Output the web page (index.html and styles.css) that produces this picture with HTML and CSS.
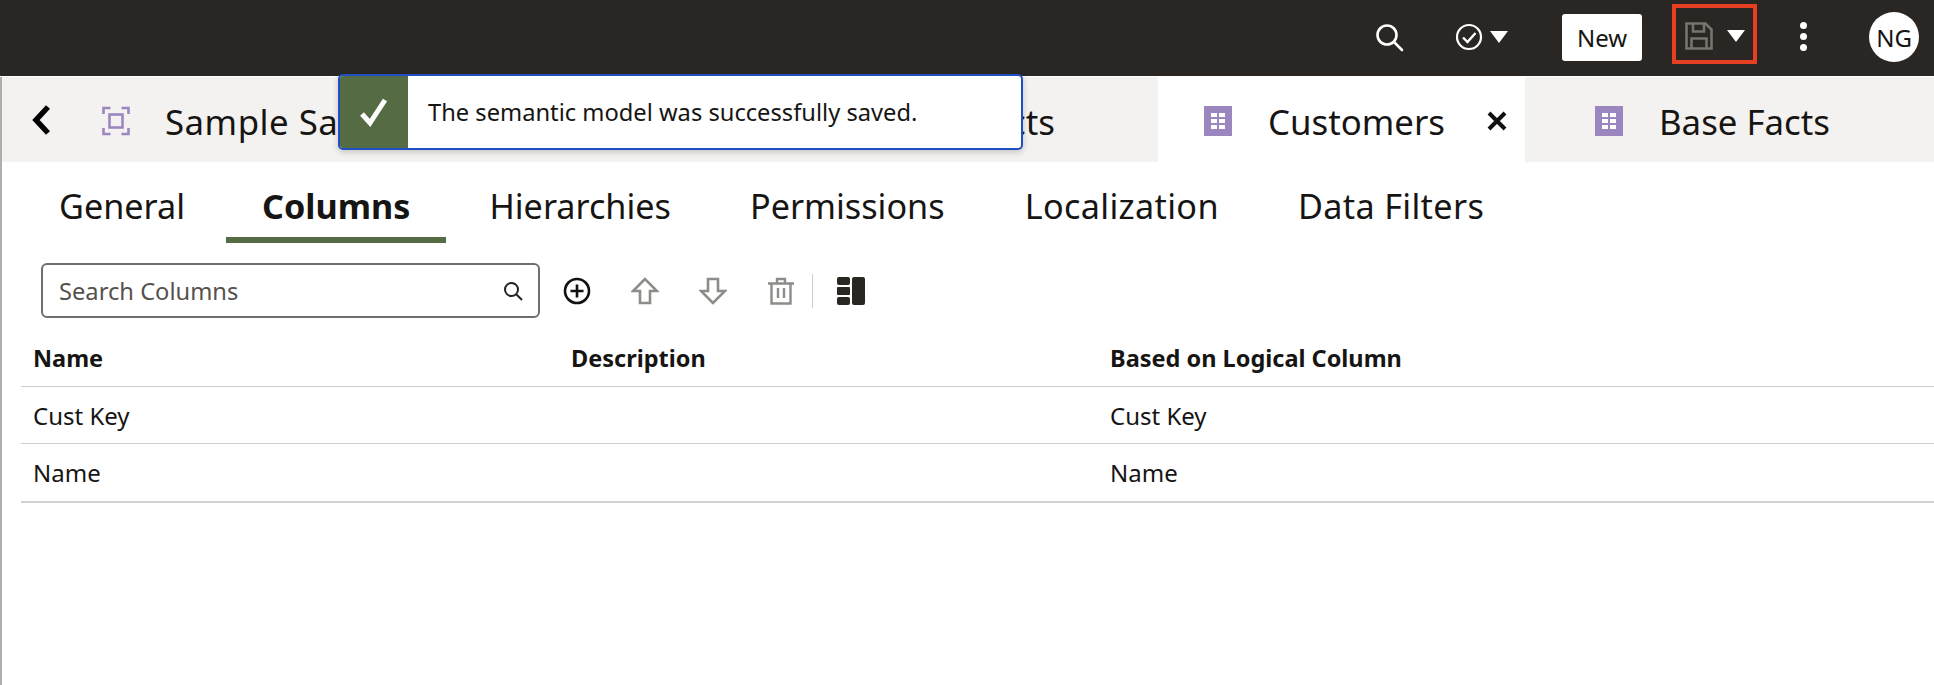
FILE: index.html
```html
<!DOCTYPE html>
<html lang="en">
<head>
  <meta charset="UTF-8" />
  <title>Semantic Model</title>
  <link rel="stylesheet" href="styles.css">
</head>
<body>

  <!-- Top bar -->
  <header class="topbar">
    <svg class="ic-search" width="30" height="30" viewBox="0 0 30 30" fill="none" stroke="#fff" stroke-width="2.600"><circle cx="13" cy="13" r="9.500"/><path d="M20 20l8 8" stroke-linecap="round"/></svg>
    <div class="check-menu">
      <svg width="28" height="28" viewBox="0 0 28 28" fill="none" stroke="#fff" stroke-width="2.200"><circle cx="14" cy="14" r="12"/><path d="M8 14.500l4.500 4.500 8-9" stroke-width="2.400"/></svg>
      <span class="caret"></span>
    </div>
    <button class="new-btn">New</button>
    <div class="save-menu">
      <svg width="28" height="28" viewBox="0 0 28 28" fill="none" stroke="#77746f" stroke-width="2.600"><path d="M1.500 1.500h19l6 6v19h-25z"/><path d="M8 1.500v8h11v-8M6.500 26.500v-10h15v10"/></svg>
      <span class="caret"></span>
    </div>
    <div class="dots"><i></i><i></i><i></i></div>
    <div class="avatar">NG</div>
  </header>

  <!-- Tabs -->
  <nav class="tabbar">
    <svg class="back" width="20" height="32" viewBox="0 0 20 32" fill="none" stroke="#000" stroke-width="5.500"><path d="M17 3L5 16l12 13"/></svg>
    <div class="tab tab-model">
      <svg width="28" height="30" viewBox="0 0 28 30" fill="none" stroke="#9c86c0" stroke-width="2.600"><path d="M1.500 8V2h7M19.500 2h7v6M26.500 22v6h-7M8.500 28h-7v-6"/><rect x="7.500" y="8.500" width="13" height="13"/></svg>
      <span>Sample Sales</span>
    </div>
    <div class="tab tab-mid"><span>Products</span></div>
    <div class="tab tab-active">
      <svg class="grid-ic" width="28" height="30" viewBox="0 0 28 30"><use href="#grid"/></svg>
      <span>Customers</span>
      <svg class="close" width="20" height="20" viewBox="0 0 20 20" stroke="#111" stroke-width="4"><path d="M2 2l16 16M18 2L2 18"/></svg>
    </div>
    <div class="tab tab-base">
      <svg class="grid-ic" width="28" height="30" viewBox="0 0 28 30"><use href="#grid"/></svg>
      <span>Base Facts</span>
    </div>
  </nav>

  <!-- Success message -->
  <div class="toast">
    <div class="toast-ok">
      <svg width="34" height="34" viewBox="0 0 34 34" fill="none" stroke="#fff" stroke-width="5"><path d="M5 19l8 9L28 5"/></svg>
    </div>
    <div class="toast-text">The semantic model was successfully saved.</div>
  </div>

  <main class="content">
    <div class="subtabs">
      <a class="st-general">General</a>
      <a class="selected">Columns</a>
      <a>Hierarchies</a>
      <a class="st-perm">Permissions</a>
      <a class="st-wide">Localization</a>
      <a class="st-wide">Data Filters</a>
    </div>

    <div class="toolbar">
      <div class="search">
        <span>Search Columns</span>
        <svg width="20" height="20" viewBox="0 0 20 20" fill="none" stroke="#222" stroke-width="2"><circle cx="8.500" cy="8.500" r="6.500"/><path d="M13 13l6 6"/></svg>
      </div>
      <div class="tools">
        <svg width="28" height="28" viewBox="0 0 28 28" fill="none" stroke="#111" stroke-width="2.600"><circle cx="14" cy="14" r="12"/><path d="M14 7.500v13M7.500 14h13"/></svg>
        <svg width="28" height="28" viewBox="0 0 28 28" fill="none" stroke="#8e8c88" stroke-width="2.600"><path d="M14 2L2 14h7v12h10V14h7z"/></svg>
        <svg width="28" height="28" viewBox="0 0 28 28" fill="none" stroke="#8e8c88" stroke-width="2.600"><path d="M14 26L2 14h7V2h10v12h7z"/></svg>
        <svg width="28" height="28" viewBox="0 0 28 28" fill="none" stroke="#8e8c88" stroke-width="2.400"><path d="M1 6.500h26M10 6.500V2h8v4.500M4.500 6.500V26.500h19V6.500M11 11v10M17 11v10"/></svg>
        <span class="divider"></span>
        <svg width="28" height="28" viewBox="0 0 28 28" fill="#2a2622"><rect y="0" width="13" height="8" rx="2"/><rect y="10" width="13" height="8" rx="1"/><rect y="20" width="13" height="8" rx="2"/><rect x="15" y="0" width="13" height="28" rx="2"/></svg>
      </div>
    </div>

    <div class="table">
      <div class="row head"><div>Name</div><div>Description</div><div>Based on Logical Column</div></div>
      <div class="row"><div>Cust Key</div><div></div><div>Cust Key</div></div>
      <div class="row last"><div>Name</div><div></div><div>Name</div></div>
    </div>
  </main>

  <svg width="0" height="0" class="defs">
    <symbol id="grid" viewBox="0 0 28 30">
      <rect width="28" height="30" fill="#9c86c0"/>
      <g fill="#fff">
        <rect x="7" y="7" width="6" height="4"/><rect x="15" y="7" width="6" height="4"/>
        <rect x="7" y="13" width="6" height="4"/><rect x="15" y="13" width="6" height="4"/>
        <rect x="7" y="19" width="6" height="4"/><rect x="15" y="19" width="6" height="4"/>
      </g>
    </symbol>
  </svg>
</body>
</html>
```

FILE: styles.css
```css
* {
  margin: 0;
  padding: 0;
  box-sizing: border-box;
}

html, body {
  height: 100%;
  overflow: hidden;
}

body {
  font-family: "Noto Sans", Arial, sans-serif;
  color: #161513;
  background: #fff;
}

.defs {
  display: block;
  height: 0;
}

/* top bar */
.topbar {
  height: 76px;
  background: #2a2623;
  display: flex;
  align-items: center;
  padding: 0 15px 2px 0;
  justify-content: flex-end;
}

.caret {
  display: block;
  width: 0;
  height: 0;
  border-left: 9px solid transparent;
  border-right: 9px solid transparent;
  border-top: 12px solid #fff;
}

.check-menu {
  display: flex;
  align-items: center;
  gap: 7px;
  margin-left: 51px;
}

.new-btn {
  width: 80px;
  height: 47px;
  margin-left: 54px;
  background: #fff;
  border: none;
  border-radius: 3px;
  font: 24px "Noto Sans", sans-serif;
  color: #161513;
}

.save-menu {
  width: 85px;
  height: 60px;
  margin: 0 0 6px 30px;
  border: 4px solid #e63f22;
  display: flex;
  align-items: center;
  gap: 14px;
  padding: 4px 0 0 9px;
}

.dots {
  width: 8px;
  margin: 0 0 2px 43px;
  display: flex;
  flex-direction: column;
  gap: 4px;
}

.dots i {
  display: block;
  width: 7px;
  height: 7px;
  border-radius: 50%;
  background: #fff;
}

.avatar {
  width: 50px;
  height: 50px;
  margin-left: 61px;
  border-radius: 50%;
  background: #fff;
  color: #161513;
  font-size: 24px;
  display: flex;
  align-items: center;
  justify-content: center;
}

/* tabs */
.tabbar {
  height: 85px;
  background: #f3f2f0;
  margin-top: 1px;
  display: flex;
  align-items: stretch;
  position: relative;
  font-size: 34.800px;
  border-left: 2px solid #b0aeaa;
}

.back {
  align-self: center;
  margin-left: 29px;
  flex-shrink: 0;
}

.tab {
  display: flex;
  align-items: center;
  white-space: nowrap;
  padding-top: 3px;
}

.tab-model {
  width: 481px;
  padding-left: 51px;
  gap: 35px;
  letter-spacing: 0.5px;
}

.tab-mid {
  width: 626px;
  justify-content: flex-end;
  padding-right: 103px;
}

.tab-active {
  width: 367px;
  background: #fff;
  padding-left: 46px;
  gap: 36px;
}

.tab-active .close {
  margin-left: 6px;
}

.tab-base {
  padding-left: 70px;
  gap: 36px;
}

/* toast sits over the tab strip */
.toast {
  position: absolute;
  left: 338px;
  top: 74px;
  width: 685px;
  height: 76px;
  display: flex;
  background: #fff;
  border: 2px solid #1f4fc0;
  border-radius: 5px;
  box-shadow: 0 2px 6px rgba(0, 0, 0, 0.2);
  overflow: hidden;
}

.toast-ok {
  width: 68px;
  background: #556b43;
  display: flex;
  align-items: center;
  justify-content: center;
}

.toast-text {
  padding-left: 20px;
  align-self: center;
  font-size: 23.700px;
}

/* content */
.content {
  border-left: 2px solid #b0aeaa;
  height: 523px;
}

.subtabs {
  display: flex;
  align-items: flex-start;
  height: 80px;
  padding-left: 21px;
  font-size: 34.200px;
}

.subtabs a {
  padding: 20px 36px 0;
  margin-right: 7px;
  white-space: nowrap;
  height: 81px;
}

.subtabs .st-general {
  margin-right: 5px;
}

.subtabs .st-perm {
  margin-right: 8px;
}

.subtabs .st-wide {
  letter-spacing: 0.35px;
}

.subtabs .selected {
  font-weight: bold;
  border-bottom: 6px solid #556b43;
}

.toolbar {
  display: flex;
  align-items: center;
  margin-top: 21px;
  padding-left: 39px;
}

.search {
  width: 499px;
  height: 55px;
  border: 2px solid #716f6b;
  border-radius: 6px;
  display: flex;
  align-items: center;
  justify-content: space-between;
  padding: 0 15px 0 16px;
  font-size: 23.700px;
  color: #55524e;
}

.tools {
  display: flex;
  align-items: center;
  gap: 40px;
  margin-left: 23px;
}

.divider {
  width: 1px;
  height: 34px;
  background: #cfcdc9;
  margin: 0 -16px 0 -23px;
}

.table {
  margin: 10px 0 0 19px;
  font-size: 24px;
}

.row {
  display: grid;
  grid-template-columns: 538px 539px 1fr;
  height: 57px;
  align-items: center;
  padding-left: 12px;
  border-bottom: 1px solid #cfcdc9;
}

.row.head {
  font-weight: bold;
  font-size: 23.500px;
  height: 59px;
  padding-top: 2px;
}

.row.last {
  height: 59px;
  border-bottom: 2px solid #d4d2ce;
}
```
